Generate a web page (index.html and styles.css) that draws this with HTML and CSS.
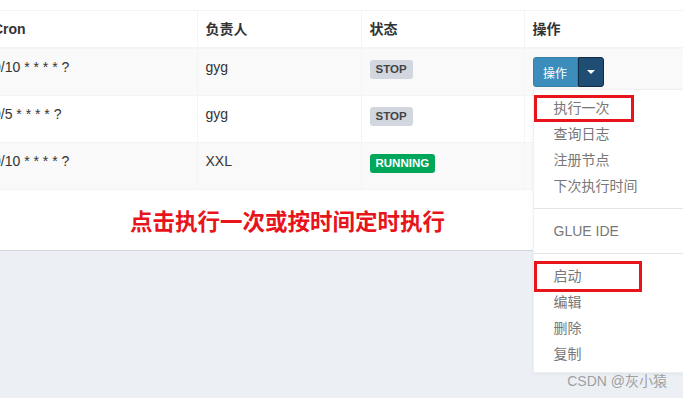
FILE: index.html
```html
<!DOCTYPE html>
<html lang="zh-CN">
<head>
  <meta charset="UTF-8">
  <title>任务管理</title>
  <link rel="stylesheet" href="styles.css">
</head>
<body>

  <div class="box">
    <table class="job-table">
      <colgroup>
        <col class="col-cron">
        <col class="col-owner">
        <col class="col-status">
        <col class="col-op">
      </colgroup>
      <thead>
        <tr>
          <th>Cron</th>
          <th>负责人</th>
          <th>状态</th>
          <th>操作</th>
        </tr>
      </thead>
      <tbody>
        <tr>
          <td>0/10 * * * * ?</td>
          <td>gyg</td>
          <td><span class="label label-stop">STOP</span></td>
          <td>
            <div class="btn-group">
              <button class="btn btn-main">操作</button><button class="btn btn-caret"><span class="caret"></span></button>
              <ul class="dropdown-menu">
                <li class="marked">执行一次<span class="mark mark-run"></span></li>
                <li>查询日志</li>
                <li>注册节点</li>
                <li>下次执行时间</li>
                <li class="divider"></li>
                <li>GLUE IDE</li>
                <li class="divider"></li>
                <li class="marked">启动<span class="mark mark-start"></span></li>
                <li>编辑</li>
                <li>删除</li>
                <li>复制</li>
              </ul>
            </div>
          </td>
        </tr>
        <tr>
          <td>0/5 * * * * ?</td>
          <td>gyg</td>
          <td><span class="label label-stop">STOP</span></td>
          <td></td>
        </tr>
        <tr>
          <td>0/10 * * * * ?</td>
          <td>XXL</td>
          <td><span class="label label-running">RUNNING</span></td>
          <td></td>
        </tr>
      </tbody>
    </table>

    <div class="tip">点击执行一次或按时间定时执行</div>
  </div>

  <div class="watermark">CSDN @灰小猿</div>

</body>
</html>
```

FILE: styles.css
```css
body {
  margin: 0;
  height: 398px;
  overflow: hidden;
  position: relative;
  background-color: #ecf0f5;
  font-family: 'Liberation Sans', 'Noto Sans CJK SC', sans-serif;
  font-size: 14px;
  color: #333;
}

.box {
  background-color: white;
  padding-top: 10px;
  border-bottom: 1px solid #d2d6de;
}

.job-table {
  border-collapse: collapse;
  table-layout: fixed;
  width: 713px;
  margin-left: -15px;
}

.col-cron { width: 212px; }
.col-owner { width: 164px; }
.col-status { width: 163px; }
.col-op { width: 174px; }

.job-table th,
.job-table td {
  padding: 8px;
  line-height: 20px;
  text-align: left;
  vertical-align: top;
  border: 1px solid #f4f4f4;
}

.job-table th {
  border-bottom-width: 2px;
  font-weight: bold;
}

.job-table td {
  height: 30px;
}

.job-table thead th:first-child,
.job-table td:first-child {
  border-left: none;
}

.job-table tbody tr:nth-child(odd) td {
  background-color: #f9f9f9;
}

.label {
  display: inline-block;
  margin-top: 3px;
  padding: 0 6px;
  font-size: 11.5px;
  line-height: 19px;
  font-weight: bold;
  border-radius: 3px;
}

.label-stop {
  background-color: #d2d6de;
  color: #444;
}

.label-running {
  background-color: #00a65a;
  color: white;
}

.btn-group {
  position: relative;
  display: inline-flex;
}

.btn {
  height: 30px;
  font-family: inherit;
  font-size: 12px;
  color: white;
  border: 1px solid #367fa9;
  cursor: pointer;
}

.btn-main {
  width: 45px;
  padding: 0;
  background-color: #3c8dbc;
  border-radius: 3px 0 0 3px;
}

.btn-caret {
  width: 26px;
  padding: 0;
  background-color: #204d74;
  border-color: #122b40;
  border-radius: 0 3px 3px 0;
  display: flex;
  align-items: center;
  justify-content: center;
}

.caret {
  width: 0;
  height: 0;
  border-top: 4px solid white;
  border-left: 4px solid transparent;
  border-right: 4px solid transparent;
}

.dropdown-menu {
  position: absolute;
  top: 32px;
  left: 0;
  width: 170px;
  margin: 0;
  padding: 5px 0;
  list-style: none;
  background-color: white;
  border: 1px solid #f0f0f0;
  box-shadow: 0 1px 3px rgba(0,0,0,0.06);
  z-index: 10;
}

.dropdown-menu li {
  position: relative;
  padding: 3px 20px;
  line-height: 20px;
  color: #777;
  white-space: nowrap;
}

.dropdown-menu .divider {
  height: 1px;
  padding: 0;
  margin: 9px 0;
  background-color: #e5e5e5;
}

.mark {
  position: absolute;
  left: 0;
  border: 3px solid #e8141c;
  box-sizing: border-box;
}

.mark-run {
  top: 0;
  width: 100px;
  height: 27px;
}

.mark-start {
  top: -2px;
  width: 108px;
  height: 31px;
}

.tip {
  height: 60px;
  padding-left: 130px;
  display: flex;
  align-items: center;
  font-size: 22.5px;
  font-weight: bold;
  color: #e8141c;
  font-family: 'Noto Sans CJK SC', sans-serif;
}

.watermark {
  position: absolute;
  right: 16px;
  bottom: 7px;
  line-height: 20px;
  font-size: 14px;
  color: #a0a0a0;
}
```
